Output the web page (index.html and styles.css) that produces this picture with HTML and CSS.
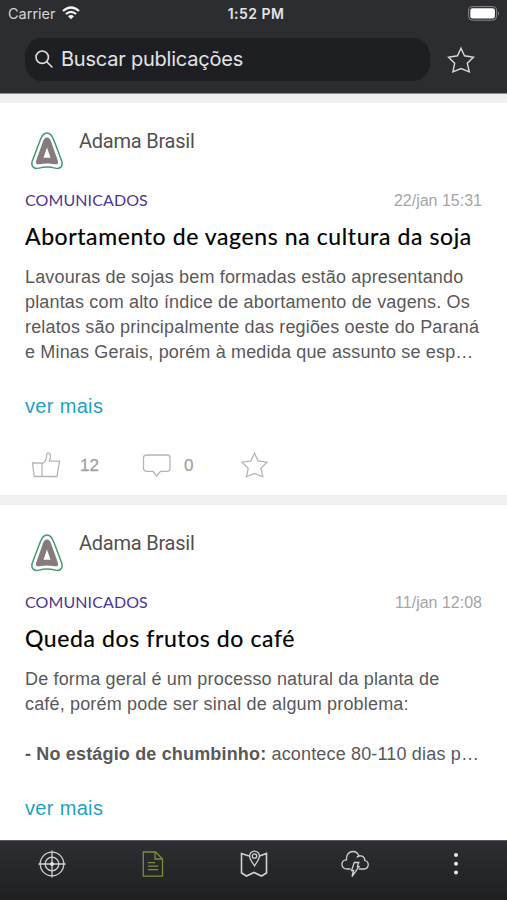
FILE: index.html
```html
<!DOCTYPE html>
<html lang="pt-BR">
<head>
<meta charset="utf-8">
<title>Publicações</title>
<link rel="stylesheet" href="styles.css">
</head>
<body>
<svg class="defs" width="0" height="0" aria-hidden="true">
  <symbol id="star" viewBox="0 0 28 28"><path d="M14 2.200 17.500 9.800 26.500 11.200 20.300 17.200 22.300 25.800 14 22.500 5.900 25.800 7.700 17.200 1.500 11.200 10.500 9.800Z"/></symbol>
  <symbol id="logo" viewBox="0 0 32 38">
    <path d="M16 1C12.500 1 10.800 3.600 9.200 8L1.300 29C-.5 34.500 3.500 37.500 8 36.100Q16 33.800 24 36.100C28.500 37.500 32.500 34.500 30.700 29L22.800 8C21.200 3.600 19.500 1 16 1Z" fill="#fff" stroke="#429b76" stroke-width="1.500"/>
    <path fill-rule="evenodd" d="M16 5.500C13.500 5.500 12.500 8 11.700 10.200L5.200 28.500C4.200 31.800 5.900 32.800 8.700 32.200Q16 30.600 23.300 32.200C26.100 32.800 27.800 31.800 26.800 28.500L20.300 10.200C19.500 8 18.500 5.500 16 5.500ZM16 15.500 19.500 25.800H12.500Z" fill="#857b7c"/>
  </symbol>
</svg>
<div class="app">
  <header class="top">
    <div class="status">
      <div class="carrier"><span>Carrier</span>
        <svg width="18" height="14" viewBox="0 0 18 14" fill="none" stroke="#f2f2f3" stroke-width="2.200"><path d="M1 5Q9-2 17 5M3.900 8Q9 3.600 14.100 8"/><path d="M6 10.200Q9 7.800 12 10.200L9 13.200Z" fill="#f2f2f3" stroke="none"/></svg>
      </div>
      <div class="clock">1:52 PM</div>
      <svg class="battery" width="32" height="15" viewBox="0 0 32 15"><rect x=".6" y=".6" width="28" height="13.600" rx="4" fill="none" stroke="#8a8b8e" stroke-width="1"/><rect x="2.300" y="2.300" width="24.600" height="10.200" rx="2.200" fill="#fff"/><path d="M30 5Q32 7.400 30 9.800Z" fill="#8a8b8e"/></svg>
    </div>
    <div class="searchrow">
      <div class="search">
        <svg width="18" height="18" viewBox="0 0 18 18" fill="none" stroke="#dedee0" stroke-width="1.600" stroke-linecap="round"><circle cx="7.200" cy="7.200" r="6.200"/><path d="M11.700 11.700 17 17"/></svg>
        <span>Buscar publicações</span>
      </div>
      <svg class="topstar"><use href="#star"/></svg>
    </div>
  </header>
  <main class="feed">
    <article class="card">
      <div class="author"><svg class="logo"><use href="#logo"/></svg><span>Adama Brasil</span></div>
      <div class="meta"><span class="tag">COMUNICADOS</span><time>22/jan 15:31</time></div>
      <h2>Abortamento de vagens na cultura da soja</h2>
      <p>Lavouras de sojas bem formadas estão apresentando<br>plantas com alto índice de abortamento de vagens. Os<br>relatos são principalmente das regiões oeste do Paraná<br>e Minas Gerais, porém à medida que assunto se esp…</p>
      <a class="more">ver mais</a>
      <div class="actions">
        <svg class="like" width="30" height="28" viewBox="0 0 30 28"><path d="M1.500 12H11V25.500H3.200ZM11 13C15.200 10.500 15.500 7.500 15.700 3.500 15.800 1.500 19.800 1 19.500 5.500 19.400 7.500 18.500 8.800 18.400 10.200H28.500L26 25.500H11"/></svg>
        <span class="likes">12</span>
        <svg class="comment" width="30" height="28" viewBox="0 0 30 28"><path d="M5 4H25Q28 4 28 7V17Q28 20.300 25 20.300H18.500L14.500 25 11 20.300H5Q1.500 20.300 1.500 17V7Q1.500 4 5 4Z"/></svg>
        <span class="comments">0</span>
        <svg class="star"><use href="#star"/></svg>
      </div>
    </article>
    <article class="card">
      <div class="author"><svg class="logo"><use href="#logo"/></svg><span>Adama Brasil</span></div>
      <div class="meta"><span class="tag">COMUNICADOS</span><time>11/jan 12:08</time></div>
      <h2>Queda dos frutos do café</h2>
      <p>De forma geral é um processo natural da planta de<br>café, porém pode ser sinal de algum problema:<br><br><b>- No estágio de chumbinho:</b> acontece 80-110 dias p…</p>
      <a class="more">ver mais</a>
    </article>
  </main>
  <nav class="tabs">
    <svg viewBox="0 0 28 28"><g><circle cx="14" cy="14" r="11.800"/><circle cx="14" cy="14" r="6.800"/><path d="M14 .5V27.500M.5 14H27.500"/></g><circle cx="14" cy="14" r="2" fill="#e4e4e5" stroke="none"/></svg>
    <svg class="active" viewBox="0 0 28 28"><path d="M4.300 2H16.500L23.500 9V26.200H4.300ZM16 2V9H23.500M8.800 12.700H16M8.800 16.200H19.300M8.800 19.700H19.300"/></svg>
    <svg viewBox="0 0 28 28"><path stroke-width="1.600" d="M9 6 1.500 3.500V23L6.500 26 14 22.500 21.500 26 26.500 23V3.500L19.500 6"/><path d="M14.500 16C12.500 12.500 9.600 9.500 9.600 6A4.900 4.900 0 0 1 19.400 6C19.400 9.500 16.500 12.500 14.500 16Z"/><circle cx="14.500" cy="6" r="2.200"/></svg>
    <svg viewBox="0 0 28 28"><path d="M9.500 19H6.500C-.5 19-1 10 5.500 9.800 5 4 8.500 1.500 12 1.500 15 1.500 17 3.500 18 6 22 5 24 8 23.800 10.500 29 12 28 19 22.500 19H18M18 6Q16.500 6.300 15.800 7.500"/><path d="M13.300 12.500H17.800L16.300 16.700H18L11 26.500 12.500 20.500H10.500Z"/></svg>
    <svg viewBox="0 0 28 28"><g fill="#e8e8e9" stroke="none"><circle cx="14" cy="5" r="2"/><circle cx="14" cy="13.700" r="2"/><circle cx="14" cy="22.400" r="2"/></g></svg>
  </nav>
</div>
</body>
</html>
```
FILE: styles.css
```css
* { box-sizing: border-box; }
body { margin: 0; font-family: "Liberation Sans", Arial, sans-serif; background: #fff; }
.defs { display: block; }
.app { width: 507px; height: 900px; display: flex; flex-direction: column; overflow: hidden; }
.top { height: 94px; flex: none; background: #2c2d31; border-bottom: 1px solid #8b8c8e; color: #e4e4e6; }
.status { height: 28px; display: grid; grid-template-columns: 1fr auto 1fr; align-items: center; padding: 0 7px 0 8px; }
.carrier { display: flex; align-items: center; gap: 6px; font: 14.5px Inter, sans-serif; color: #d4d4d6; margin-top: -2px; }
.clock { font: 600 14px Inter, sans-serif; letter-spacing: .45px; padding-left: 4px; margin-top: -1px; }
.battery { justify-self: end; margin-top: -2px; }
.searchrow { display: flex; align-items: center; padding-left: 25px; margin-top: 10px; }
.search { width: 405px; height: 43px; border-radius: 17px; background: #1e1f23; display: flex; align-items: center; gap: 8px; padding: 0 0 2px 10px; font: 20px Inter, sans-serif; letter-spacing: -.22px; }
.topstar { width: 28px; height: 28px; margin-left: 17px; fill: none; stroke: #d9d9dc; stroke-width: 1.4; }
.feed { flex: none; height: 746px; background: #f0f0f1; padding-top: 9px; display: flex; flex-direction: column; gap: 10px; overflow: hidden; }
.card { flex: none; height: 392px; background: #fff; padding: 0 25px; }
.author { height: 83px; display: flex; padding: 28px 0 0 6px; font: 20px/20px Roboto, sans-serif; letter-spacing: -.23px; color: #515153; }
.logo { width: 32px; height: 38px; margin: 1px 16px 0 0; }
.meta { height: 28px; display: flex; justify-content: space-between; align-items: center; }
.tag { font: 16px Lato, sans-serif; letter-spacing: .1px; color: #4c3693; margin-top: -2px; }
time { font-size: 16px; color: #a5a5a5; margin-top: 2px; }
h2 { margin: -1px 0 0; font: 400 23px/46px Lato, sans-serif; letter-spacing: .61px; color: #000; white-space: nowrap; -webkit-text-stroke: .2px #000; }
p { margin: 6px 0 0; height: 100px; font-size: 18px; line-height: 25px; letter-spacing: .165px; color: #59595b; white-space: nowrap; }
.more { display: block; margin-top: 29px; font-size: 20px; line-height: 24px; letter-spacing: .33px; color: #219fc5; }
.actions { display: flex; align-items: center; height: 28px; margin-top: 33px; padding-left: 6px; font-size: 17px; color: #a3a3a3; fill: none; stroke: #b5b5b5; stroke-width: 1.3; }
.likes { width: 62px; margin: 1px 0 0 19px; -webkit-text-stroke: .3px #a3a3a3; }
.comments { width: 56px; margin: 1px 0 0 12px; -webkit-text-stroke: .3px #a3a3a3; }
.star { width: 29px; height: 28px; }
.tabs { height: 60px; flex: none; background: linear-gradient(#2d2e32, #1f2024); border-top: 1px solid #55565a; display: grid; grid-template-columns: repeat(5, 101px); justify-content: center; justify-items: center; padding-top: 9px; }
.tabs svg { width: 28px; height: 28px; fill: none; stroke: #d2d2d4; stroke-width: 1.3; }
.tabs .active { stroke: #7d8c3d; }
```
